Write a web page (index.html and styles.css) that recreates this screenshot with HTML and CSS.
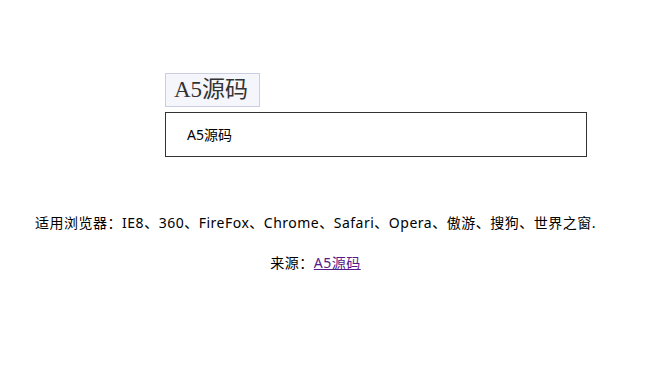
FILE: index.html
```html
<!DOCTYPE html>
<html lang="zh-CN">
<head>
<meta charset="utf-8">
<title>A5源码</title>
<link rel="stylesheet" href="styles.css">
</head>
<body>
<div class="page">
  <div class="demo">
    <div class="tab">A5源码</div>
    <div class="panel">A5源码</div>
  </div>
  <div class="footer">
    <p class="line">适用浏览器：IE8、360、FireFox、Chrome、Safari、Opera、傲游、搜狗、世界之窗.</p>
    <p class="line">来源：<a class="link" href="#">A5源码</a></p>
  </div>
</div>
</body>
</html>
```
FILE: styles.css
```css
html, body {
  margin: 0;
  padding: 0;
  background: #ffffff;
}
.page {
  width: 631px;
  font-family: "Noto Sans", "Noto Sans CJK SC", sans-serif;
  font-size: 14px;
  color: #000;
}
.demo {
  padding-top: 73px;
  padding-left: 165px;
}
.tab {
  display: inline-block;
  box-sizing: border-box;
  height: 34px;
  width: 95px;
  padding-left: 8px;
  background: #f5f6fb;
  border: 1px solid #c9cfe1;
  font-family: "Liberation Serif", "Noto Sans CJK SC", serif;
  font-size: 23px;
  line-height: 32px;
  color: #333;
  vertical-align: top;
}
.panel {
  box-sizing: border-box;
  margin-top: 5px;
  width: 422px;
  height: 45px;
  border: 1px solid #333;
  padding-left: 21px;
  line-height: 43px;
  font-family: "Noto Sans", "Noto Sans CJK SC", sans-serif;
  font-size: 14px;
}
.footer {
  padding-top: 56px;
  text-align: center;
}
.line {
  margin: 0 0 20px;
  line-height: 20px;
  letter-spacing: 0.5px;
}
.link {
  color: #551a8b;
  text-decoration: underline;
}
```
